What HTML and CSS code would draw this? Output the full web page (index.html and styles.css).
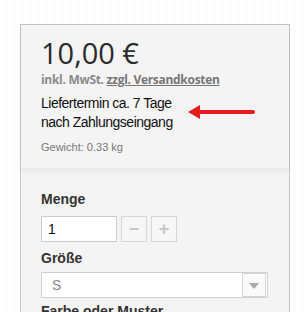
FILE: index.html
```html
<!DOCTYPE html>
<html lang="de">
<head>
<meta charset="UTF-8">
<title>Artikel</title>
<link rel="stylesheet" href="styles.css">
</head>
<body>
<div class="box">
    <div class="price-section">
        <div class="price">10,00 €</div>
        <div class="tax">inkl. MwSt. <a href="#">zzgl. Versandkosten</a></div>
        <div class="delivery">Liefertermin ca. 7 Tage<br>nach Zahlungseingang</div>
        <div class="weight">Gewicht: 0.33 kg</div>
        <svg class="arrow" width="70" height="18" viewBox="0 0 70 18">
            <path d="M10 9 L66 9" stroke="#e51c1c" stroke-width="4" stroke-linecap="round"/>
            <path d="M1 9 L13 2 L13 16 Z" fill="#e51c1c"/>
        </svg>
    </div>
    <div class="options">
        <div class="label">Menge</div>
        <div class="qty">
            <input type="text" value="1">
            <button class="step">&minus;</button>
            <button class="step">+</button>
        </div>
        <div class="label">Größe</div>
        <div class="select">
            <span>S</span>
            <span class="caret"></span>
        </div>
        <div class="label">Farbe oder Muster</div>
    </div>
</div>
</body>
</html>
```
FILE: styles.css
```css
body {
    margin: 0;
    padding: 24px 0 0 20px;
    background-color: #fff;
    background-image: repeating-linear-gradient(90deg, #fff 0, #fff 5px, #f8f8f8 6px, #fff 8px);
    font-family: "Liberation Sans", Arial, sans-serif;
    overflow: hidden;
}
.box {
    width: 268px;
    background-color: #f4f4f4;
    border: 1px solid #c4c4c4;
}
.price-section {
    position: relative;
    padding: 10px 20px 15px 20px;
    border-bottom: 1px solid #eaeaea;
    box-shadow: 0 2px 5px rgba(0,0,0,0.06);
}
.price {
    font-family: "Open Sans", sans-serif;
    font-size: 29px;
    color: #2b2b2b;
    line-height: 36px;
}
.tax {
    font-family: "Open Sans", sans-serif;
    font-weight: bold;
    font-size: 12px;
    letter-spacing: -0.3px;
    color: #8a8a8a;
    line-height: 18px;
}
.tax a {
    color: #777;
    text-decoration: underline;
}
.delivery {
    margin-top: 5px;
    font-size: 14px;
    letter-spacing: -0.5px;
    line-height: 19px;
    color: #111;
}
.weight {
    margin-top: 9px;
    font-size: 11px;
    color: #777;
}
.arrow {
    position: absolute;
    left: 166px;
    top: 78px;
}
.options {
    padding: 21px 20px 0 20px;
}
.label {
    font-size: 14px;
    font-weight: bold;
    color: #333;
    line-height: 18px;
}
.qty {
    display: flex;
    gap: 4px;
    margin: 8px 0 7px 0;
}
.qty input {
    width: 68px;
    height: 24px;
    padding: 0 0 0 6px;
    border: 1px solid #ccc;
    font-family: "Liberation Sans", Arial, sans-serif;
    font-size: 14px;
    color: #111;
    margin: 0;
}
.step {
    width: 26px;
    height: 26px;
    padding: 0;
    border: 1px solid #d6d6d6;
    background-color: #f7f7f7;
    color: #c8c8c8;
    font-family: "Liberation Sans", Arial, sans-serif;
    font-size: 18px;
    font-weight: bold;
}
.select {
    display: flex;
    justify-content: space-between;
    align-items: center;
    width: 225px;
    height: 24px;
    margin: 5px 0 4px 0;
    background-color: #fff;
    border: 1px solid #d0d0d0;
    font-size: 14px;
    color: #888;
}
.select span {
    padding-left: 10px;
}
.select .caret {
    width: 22px;
    height: 22px;
    padding: 0;
    margin-right: 1px;
    border: 1px solid #d6d6d6;
    background-color: #fafafa;
    position: relative;
}
.select .caret::after {
    content: "";
    position: absolute;
    left: 6px;
    top: 9px;
    border-left: 5px solid transparent;
    border-right: 5px solid transparent;
    border-top: 6px solid #aaa;
}
```
